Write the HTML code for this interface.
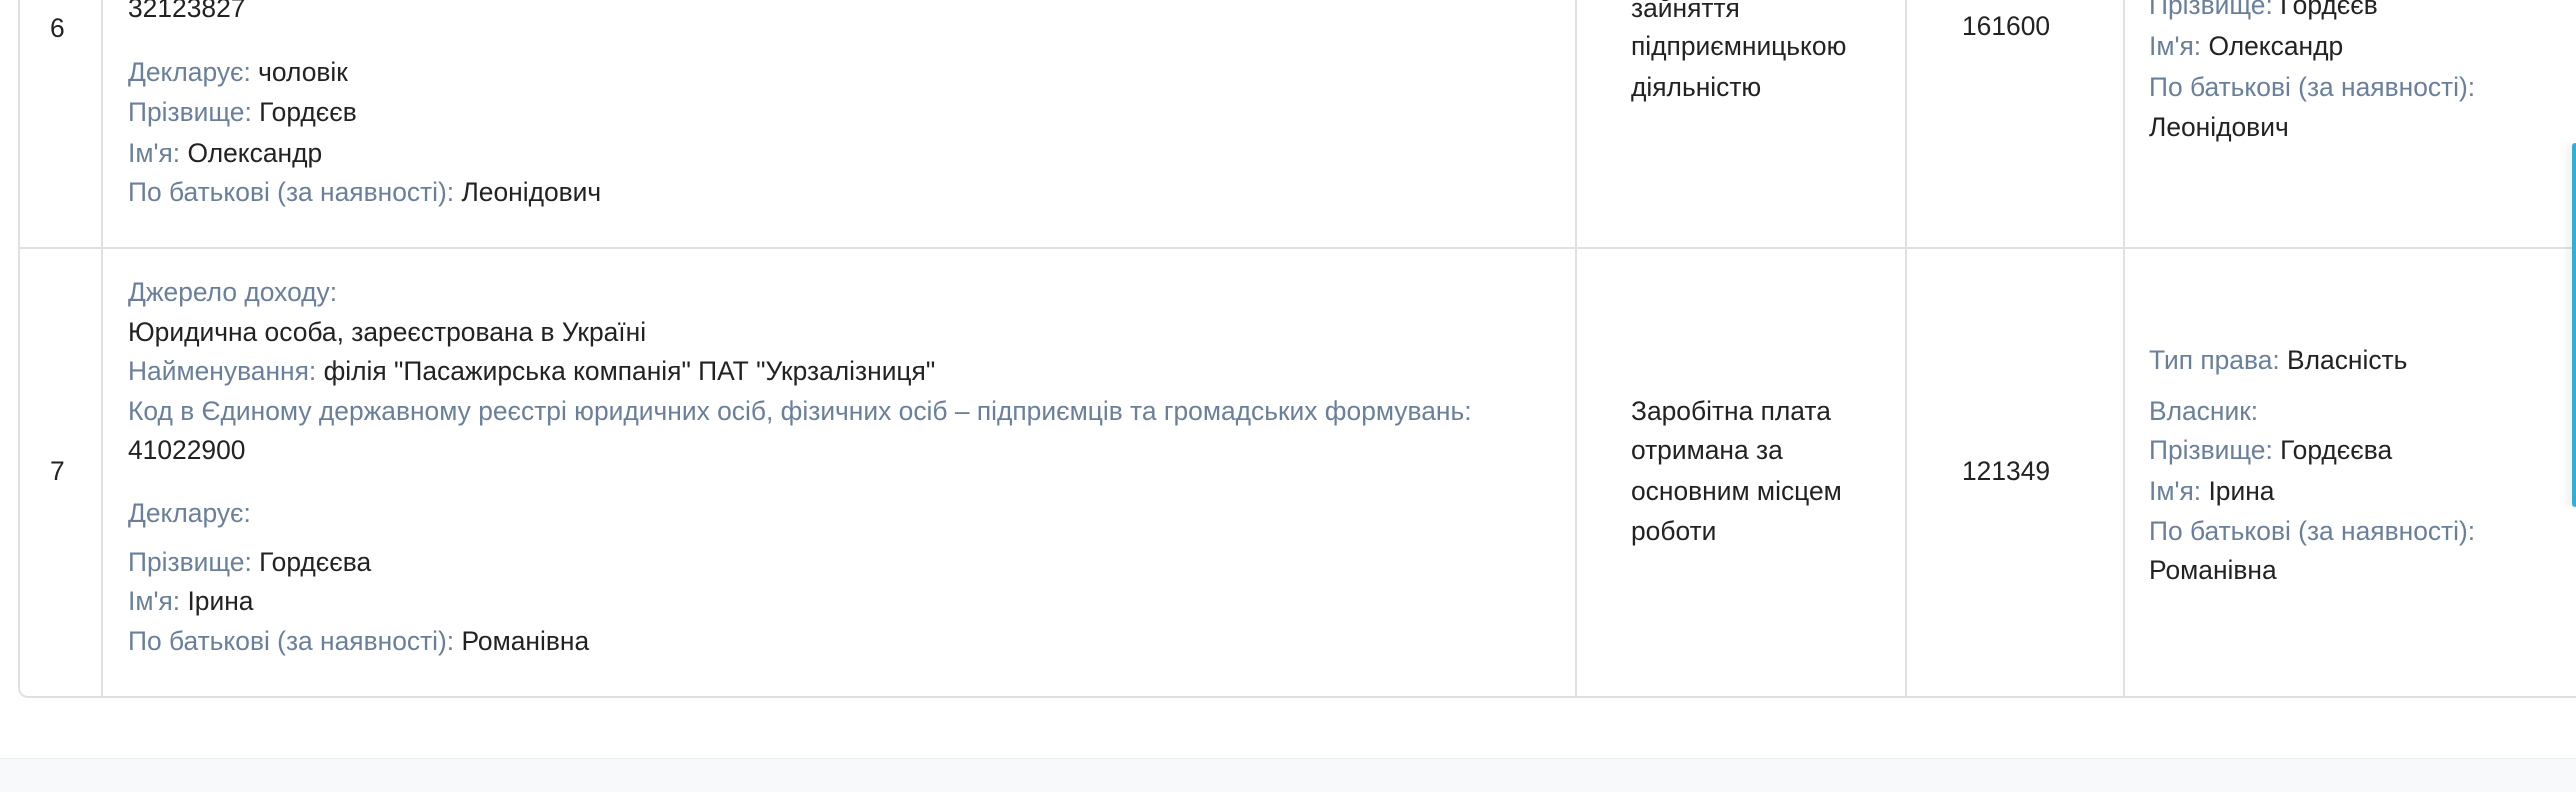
<!DOCTYPE html>
<html><head><meta charset="utf-8"><style>
body{margin:0;width:2576px;height:791px;background:#fff;position:relative;overflow:hidden;font-family:"Liberation Sans",Arial,sans-serif;font-size:26.4px;color:#222}
.t{position:absolute;white-space:nowrap;line-height:30px;margin-top:-1px}
.l{color:#6a7f9c}
.v{position:absolute;background:#dde1e6;width:2px}
.h{position:absolute;background:#dde1e6;height:2px}
</style></head><body>
<div class="v" style="left:18px;top:0;height:688px"></div>
<div class="v" style="left:101px;top:0;height:697px"></div>
<div class="v" style="left:1575px;top:0;height:697px"></div>
<div class="v" style="left:1905px;top:0;height:697px"></div>
<div class="v" style="left:2123px;top:0;height:697px"></div>
<div class="h" style="left:18px;top:247px;width:2558px"></div>
<div class="h" style="left:28px;top:696px;width:2548px"></div>
<div style="position:absolute;left:18px;top:686px;width:10px;height:10px;border-left:2px solid #dde1e6;border-bottom:2px solid #dde1e6;border-bottom-left-radius:10px"></div>
<div style="position:absolute;left:0;top:758px;width:2576px;height:33px;background:#f8f9fa;border-top:1px solid #eceef1"></div>
<div style="position:absolute;left:2572px;top:143px;width:6px;height:364px;background:#31b0d5;border-radius:4px;box-shadow:-4px 0 8px rgba(0,0,0,.08)"></div>

<div class="t" style="left:50px;top:14px">6</div>
<div class="t" style="left:128px;top:-6px">32123827</div>
<div class="t" style="left:128px;top:58px"><span class="l">Декларує:</span> чоловік</div>
<div class="t" style="left:128px;top:98px"><span class="l">Прізвище:</span> Гордєєв</div>
<div class="t" style="left:128px;top:139px"><span class="l">Ім'я:</span> Олександр</div>
<div class="t" style="left:128px;top:178px"><span class="l">По батькові (за наявності):</span> Леонідович</div>

<div class="t" style="left:1631px;top:-6px">зайняття</div>
<div class="t" style="left:1631px;top:32px">підприємницькою</div>
<div class="t" style="left:1631px;top:73px">діяльністю</div>
<div class="t" style="left:1962px;top:12px">161600</div>
<div class="t" style="left:2149px;top:-9px"><span class="l">Прізвище:</span> Гордєєв</div>
<div class="t" style="left:2149px;top:32px"><span class="l">Ім'я:</span> Олександр</div>
<div class="t" style="left:2149px;top:73px"><span class="l">По батькові (за наявності):</span></div>
<div class="t" style="left:2149px;top:113px">Леонідович</div>

<div class="t" style="left:50px;top:457px">7</div>
<div class="t l" style="left:128px;top:278px">Джерело доходу:</div>
<div class="t" style="left:128px;top:318px">Юридична особа, зареєстрована в Україні</div>
<div class="t" style="left:128px;top:357px"><span class="l">Найменування:</span> філія "Пасажирська компанія" ПАТ "Укрзалізниця"</div>
<div class="t l" style="left:128px;top:397px">Код в Єдиному державному реєстрі юридичних осіб, фізичних осіб – підприємців та громадських формувань:</div>
<div class="t" style="left:128px;top:436px">41022900</div>
<div class="t l" style="left:128px;top:499px">Декларує:</div>
<div class="t" style="left:128px;top:548px"><span class="l">Прізвище:</span> Гордєєва</div>
<div class="t" style="left:128px;top:587px"><span class="l">Ім'я:</span> Ірина</div>
<div class="t" style="left:128px;top:627px"><span class="l">По батькові (за наявності):</span> Романівна</div>

<div class="t" style="left:1631px;top:397px">Заробітна плата</div>
<div class="t" style="left:1631px;top:436px">отримана за</div>
<div class="t" style="left:1631px;top:477px">основним місцем</div>
<div class="t" style="left:1631px;top:517px">роботи</div>
<div class="t" style="left:1962px;top:457px">121349</div>
<div class="t" style="left:2149px;top:346px"><span class="l">Тип права:</span> Власність</div>
<div class="t l" style="left:2149px;top:397px">Власник:</div>
<div class="t" style="left:2149px;top:436px"><span class="l">Прізвище:</span> Гордєєва</div>
<div class="t" style="left:2149px;top:477px"><span class="l">Ім'я:</span> Ірина</div>
<div class="t" style="left:2149px;top:517px"><span class="l">По батькові (за наявності):</span></div>
<div class="t" style="left:2149px;top:556px">Романівна</div>
</body></html>
